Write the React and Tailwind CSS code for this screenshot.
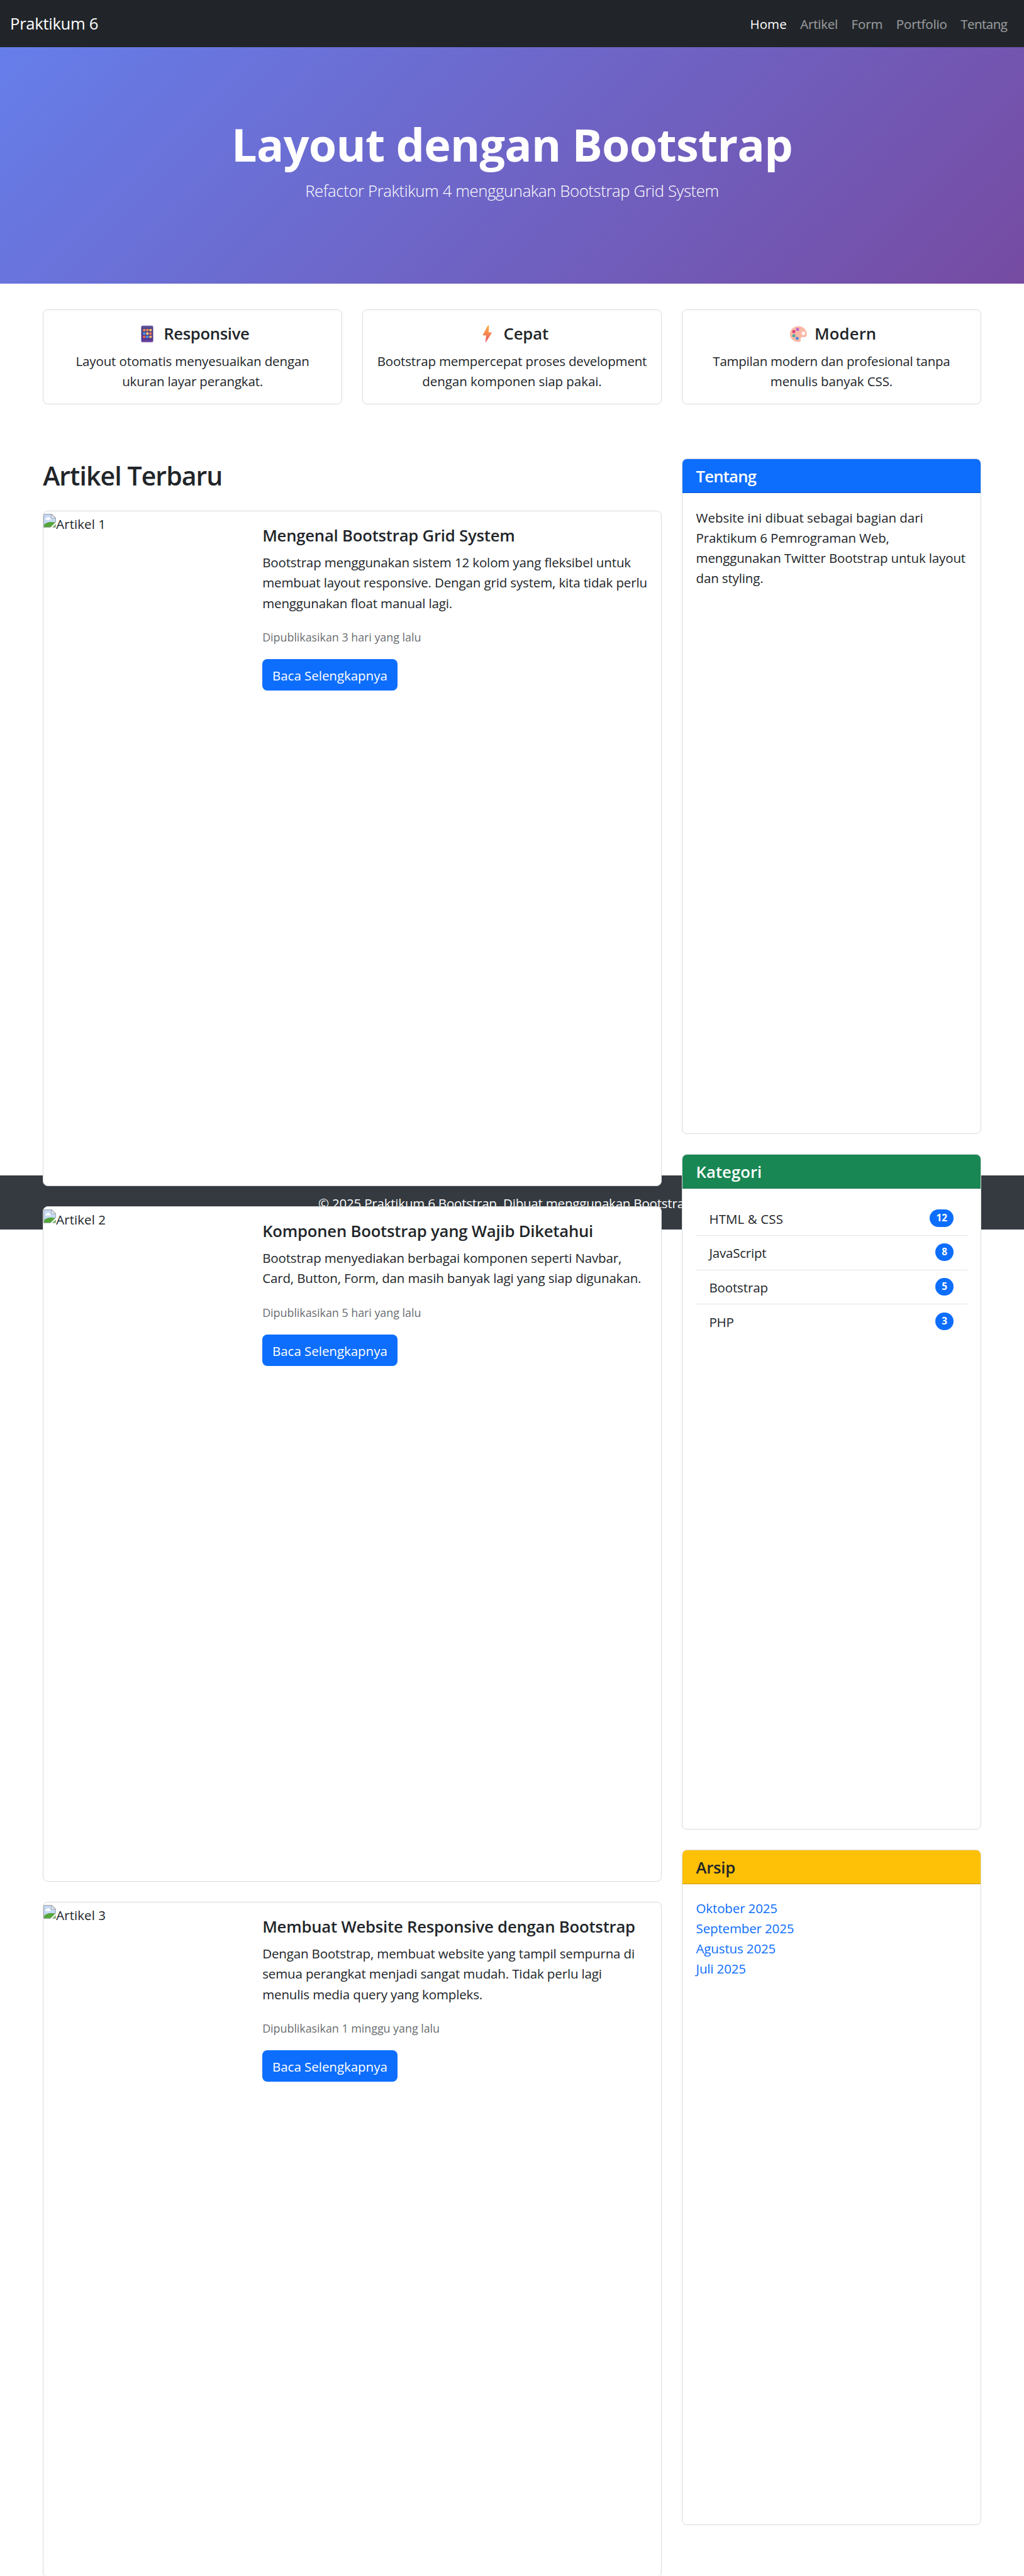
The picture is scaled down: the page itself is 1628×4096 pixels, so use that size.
function PhoneIcon() {
  return (
    <svg viewBox="0 0 28 28" className="h-7 w-7">
      <defs>
        <linearGradient id="phone-body" x1="0" y1="0" x2="0" y2="1">
          <stop offset="0" stopColor="#6d62ae" />
          <stop offset="0.15" stopColor="#4d4384" />
          <stop offset="0.85" stopColor="#53358f" />
          <stop offset="1" stopColor="#8356b4" />
        </linearGradient>
      </defs>
      <rect x="4.5" y="0.8" width="19" height="26.4" rx="2" fill="url(#phone-body)" />
      <rect x="7.4" y="6" width="3.8" height="3.8" rx="0.8" fill="#f08a5d" />
      <rect x="12.4" y="6" width="3.8" height="3.8" rx="0.8" fill="#f08a5d" />
      <rect x="17.4" y="6" width="3.8" height="3.8" rx="0.8" fill="#f6c667" />
      <rect x="7.4" y="11.4" width="3.8" height="3.8" rx="0.8" fill="#4a9be8" />
      <rect x="12.4" y="11.4" width="3.8" height="3.8" rx="0.8" fill="#f9d370" />
      <rect x="17.4" y="11.4" width="3.8" height="3.8" rx="0.8" fill="#f0745d" />
      <rect x="7.4" y="16.8" width="3.8" height="3.8" rx="0.8" fill="#ef6a5a" />
      <rect x="12.4" y="16.8" width="3.8" height="3.8" rx="0.8" fill="#4a9be8" />
      <rect x="17.4" y="16.8" width="3.8" height="3.8" rx="0.8" fill="#f6b65f" />
    </svg>
  );
}

function BoltIcon() {
  return (
    <svg viewBox="0 0 28 28" className="h-7 w-7">
      <defs>
        <linearGradient id="bolt-fill" x1="0" y1="0" x2="0" y2="1">
          <stop offset="0" stopColor="#fbb04e" />
          <stop offset="0.5" stopColor="#f5864f" />
          <stop offset="1" stopColor="#ee4d5c" />
        </linearGradient>
      </defs>
      <path d="M14.2 1 6.8 15.2c-.3.6 0 1.1.6 1.1h4.6l-1.1 10.2c0 .6.5.8.8.3l9.1-14.3c.3-.6 0-1.1-.6-1.1h-4.4l.7-9.9c0-.9-1-1.2-1.5-.5z" fill="url(#bolt-fill)" />
    </svg>
  );
}

function PaletteIcon() {
  return (
    <svg viewBox="0 0 28 28" className="h-7 w-7">
      <path
        d="M14.5 1.7C7 1.7.8 7 .8 14.5c0 6.5 5.7 12.1 13.7 12.3 3 0 4.3-1.8 3.5-4-.6-2.2.6-3.8 3-3.8h3.5c2.5-.4 3.5-2.5 3.3-5.2C27 6.5 21.5 1.7 14.5 1.7z"
        fill="#fbb9a6"
      />
      <circle cx="13" cy="6.7" r="2.5" fill="#b766d8" />
      <circle cx="7" cy="10.3" r="2.5" fill="#d9407a" />
      <circle cx="7" cy="16.7" r="2.5" fill="#52a8a0" />
      <circle cx="12.3" cy="21" r="2.5" fill="#5a8bdc" />
      <circle cx="22.3" cy="13" r="2.7" fill="#fff" />
    </svg>
  );
}

function BrokenImageIcon() {
  return (
    <svg viewBox="0 0 20 22" className="mt-[3px] h-[22px] w-5 shrink-0">
      <path d="M0.6 0.6H13L19.4 7V13.5L11.5 21.4H0.6z" fill="#c6d9f5" stroke="#a3a8ad" strokeWidth="1.1" />
      <path d="M13 0.6V7h6.4z" fill="#f4f6f8" stroke="#a3a8ad" strokeWidth="1.1" />
      <path d="M3 9.5a2.2 2.2 0 0 1 2.2-2.8 2.8 2.8 0 0 1 5 .2 1.7 1.7 0 0 1 1 2.6z" fill="#fff" />
      <path d="M1.1 20.9V17.5C4 14 8 12.5 15.5 13.2L19 13.6 11.5 20.9z" fill="#55a63a" />
      <path d="M19.4 15.8V21.4H13.8z" fill="#6db356" stroke="#a3a8ad" strokeWidth="0.8" />
      <path d="M19.9 13.2 11 21.9h2.7l6.3-6.2z" fill="#fff" />
    </svg>
  );
}

const navLinks = [
  { label: "Home", cls: "tracking-[0.005em] text-white" },
  { label: "Artikel", cls: "tracking-[-0.01em] text-white/55" },
  { label: "Form", cls: "tracking-[-0.005em] text-white/55" },
  { label: "Portfolio", cls: "tracking-[-0.007em] text-white/55" },
  { label: "Tentang", cls: "tracking-[-0.026em] text-white/55" },
];

const features = [
  {
    icon: <PhoneIcon />,
    title: "Responsive",
    titleCls: "tracking-[-0.013em]",
    lines: [
      { text: "Layout otomatis menyesuaikan dengan", cls: "tracking-[-0.006em]" },
      { text: "ukuran layar perangkat.", cls: "tracking-[-0.009em]" },
    ],
  },
  {
    icon: <BoltIcon />,
    title: "Cepat",
    titleCls: "tracking-[-0.006em]",
    lines: [
      { text: "Bootstrap mempercepat proses development", cls: "tracking-[-0.009em]" },
      { text: "dengan komponen siap pakai.", cls: "tracking-[-0.003em]" },
    ],
  },
  {
    icon: <PaletteIcon />,
    title: "Modern",
    titleCls: "tracking-[0.005em]",
    lines: [
      { text: "Tampilan modern dan profesional tanpa", cls: "tracking-[-0.012em]" },
      { text: "menulis banyak CSS.", cls: "tracking-[-0.005em]" },
    ],
  },
];

const articles = [
  {
    alt: "Artikel 1",
    title: "Mengenal Bootstrap Grid System",
    lines: [
      "Bootstrap menggunakan sistem 12 kolom yang fleksibel untuk",
      "membuat layout responsive. Dengan grid system, kita tidak perlu",
      "menggunakan float manual lagi.",
    ],
    date: "Dipublikasikan 3 hari yang lalu",
  },
  {
    alt: "Artikel 2",
    title: "Komponen Bootstrap yang Wajib Diketahui",
    lines: [
      "Bootstrap menyediakan berbagai komponen seperti Navbar,",
      "Card, Button, Form, dan masih banyak lagi yang siap digunakan.",
    ],
    date: "Dipublikasikan 5 hari yang lalu",
  },
  {
    alt: "Artikel 3",
    title: "Membuat Website Responsive dengan Bootstrap",
    lines: [
      "Dengan Bootstrap, membuat website yang tampil sempurna di",
      "semua perangkat menjadi sangat mudah. Tidak perlu lagi",
      "menulis media query yang kompleks.",
    ],
    date: "Dipublikasikan 1 minggu yang lalu",
  },
];

const categories = [
  { name: "HTML & CSS", count: 12, cls: "tracking-[0.005em]" },
  { name: "JavaScript", count: 8, cls: "tracking-[-0.01em]" },
  { name: "Bootstrap", count: 5, cls: "tracking-[-0.007em]" },
  { name: "PHP", count: 3, cls: "tracking-[-0.007em]" },
];

const archive = ["Oktober 2025", "September 2025", "Agustus 2025", "Juli 2025"];

function ArticleCard({ alt, title, lines, date }) {
  return (
    <article className="relative z-10 flex h-[1074px] shrink-0 overflow-hidden rounded-lg border border-[#dadada] bg-white">
      <div className="flex w-[326.5px] shrink-0 pt-px">
        <BrokenImageIcon />
        <span className="pt-[3px] tracking-[0.003em]">{alt}</span>
      </div>
      <div className="pt-[23px] pl-[21.5px] whitespace-nowrap">
        <h5 className="text-[25.66px] leading-[32.08px] font-semibold tracking-[-0.008em]">{title}</h5>
        <p className="mt-[10px]">
          {lines.map((line) => (
            <span key={line} className="block">{line}</span>
          ))}
        </p>
        <p className="mt-[22.6px] text-[17.96px] tracking-[-0.003em] text-[#212529]/70">{date}</p>
        <button className="mt-[18.6px] flex h-[50.2px] w-[214.5px] items-center justify-center rounded-lg bg-[#0d6efd] pt-[2.5px] tracking-[-0.002em] text-white">
          Baca Selengkapnya
        </button>
      </div>
    </article>
  );
}

function SideCard({ title, headerCls, children }) {
  return (
    <section className="relative z-10 h-[1074px] shrink-0 overflow-hidden rounded-lg border border-[#dadada] bg-white">
      <h5 className={`h-[54.3px] border-b border-black/20 pt-[12px] pl-[21.5px] text-[25.66px] leading-[32.08px] font-semibold ${headerCls}`}>
        {title}
      </h5>
      {children}
    </section>
  );
}

export default function App() {
  return (
    <div className="h-[4096px] w-[1628px] overflow-hidden bg-white font-['Open_Sans','Noto_Sans',sans-serif] text-[20.53px] leading-[32.08px] tracking-[-0.007em] text-[#212529]">
      <div className="h-[1868.9px]">
        <nav className="flex h-[74.85px] items-center justify-between bg-[#212529] pt-[2px] pr-[26.7px] pl-4">
          <span className="text-[25.66px] tracking-[-0.012em] text-white">Praktikum 6</span>
          <div className="flex gap-[21.4px]">
            {navLinks.map(({ label, cls }) => (
              <a key={label} className={cls}>{label}</a>
            ))}
          </div>
        </nav>

        <header className="h-[376.4px] bg-[linear-gradient(135deg,#667eea_0%,#764ba2_100%)] pt-[110px] text-center text-white">
          <h1 className="text-[71.86px] leading-[89.8px] font-bold tracking-[-0.01em]">Layout dengan Bootstrap</h1>
          <p className="mt-[9px] text-[25.66px] leading-[40.1px] font-light tracking-[-0.014em]">
            Refactor Praktikum 4 menggunakan Bootstrap Grid System
          </p>
        </header>

        <main className="mx-auto w-[1491.7px] pt-[40.3px]">
          <div className="grid grid-cols-3 gap-[32.08px]">
            {features.map(({ icon, title, titleCls, lines }) => (
              <div key={title} className="h-[151.1px] rounded-lg border border-[#dadada] pt-[22.8px] text-center whitespace-nowrap">
                <h5 className="flex items-center justify-center gap-[7.5px] text-[25.66px] leading-[32.08px] font-semibold">
                  <span className="flex w-[37px] justify-center">{icon}</span>
                  <span className={titleCls}>{title}</span>
                </h5>
                <p className="mt-[10.4px]">
                  {lines.map(({ text, cls }) => (
                    <span key={text} className={`block ${cls}`}>{text}</span>
                  ))}
                </p>
              </div>
            ))}
          </div>

          <div className="mt-[86.5px] flex gap-[32.08px]">
            <div className="flex w-[983.8px] flex-col">
              <h2 className="h-[83.2px] pt-[1.8px] text-[41.06px] leading-[51.3px] font-semibold tracking-[-0.023em]">Artikel Terbaru</h2>
              <div className="flex flex-col gap-8">
                {articles.map((article) => (
                  <ArticleCard key={article.alt} {...article} />
                ))}
              </div>
            </div>

            <aside className="flex w-[475.8px] flex-col gap-8">
              <SideCard title="Tentang" headerCls="bg-[#0d6efd] text-white tracking-[-0.031em]">
                <p className="pt-[22.3px] pl-[21.5px] whitespace-nowrap">
                  <span className="block tracking-[-0.002em]">Website ini dibuat sebagai bagian dari</span>
                  <span className="block">Praktikum 6 Pemrograman Web,</span>
                  <span className="block">menggunakan Twitter Bootstrap untuk layout</span>
                  <span className="block">dan styling.</span>
                </p>
              </SideCard>
              <SideCard title="Kategori" headerCls="bg-[#198754] text-white tracking-[0.002em]">
                <ul className="mx-[21px] mt-[20.4px]">
                  {categories.map(({ name, count, cls }) => (
                    <li key={name} className="flex h-[54.4px] items-center justify-between border-b border-[#dee2e6] px-[21.4px] last:border-b-0">
                      <span className={`pt-px ${cls}`}>{name}</span>
                      <span className="mb-px flex h-7 items-center rounded-full bg-[#0d6efd] px-[10.4px] text-[15.4px] font-bold tracking-normal text-white">
                        {count}
                      </span>
                    </li>
                  ))}
                </ul>
              </SideCard>
              <SideCard title="Arsip" headerCls="bg-[#ffc107] tracking-[-0.009em]">
                <ul className="pt-[21.6px] pl-[21.5px] text-[#0d6efd]">
                  {archive.map((month) => (
                    <li key={month}>{month}</li>
                  ))}
                </ul>
              </SideCard>
            </aside>
          </div>
        </main>
      </div>

      <footer className="flex h-[85.8px] items-center justify-center bg-[#343a40] pt-[2px] tracking-[-0.01em] text-white">
        © 2025 Praktikum 6 Bootstrap. Dibuat menggunakan Bootstrap 5.
      </footer>
    </div>
  );
}
